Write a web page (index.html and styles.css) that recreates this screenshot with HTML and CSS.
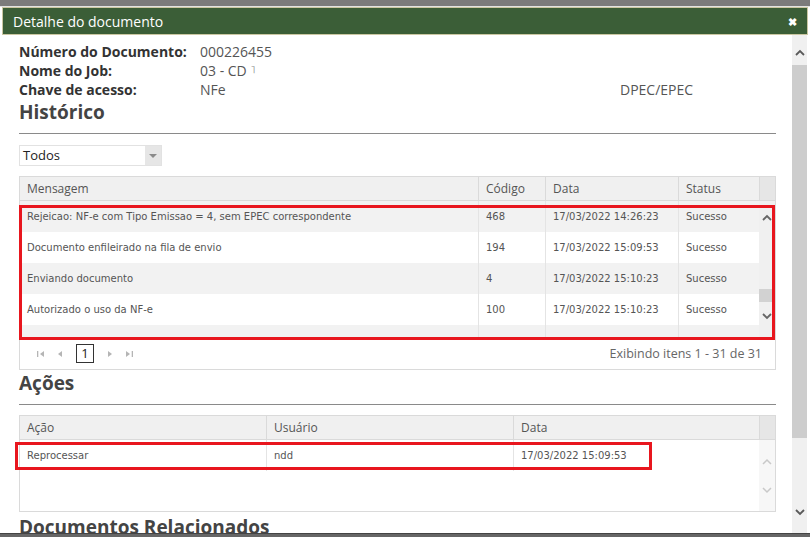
FILE: index.html
```html
<!DOCTYPE html>
<html lang="pt-BR">
<head>
  <meta charset="UTF-8">
  <title>Detalhe do documento</title>
  <link rel="stylesheet" href="styles.css">
</head>
<body>
  <div class="top-strip"></div>

  <div class="dialog-title">
    <span>Detalhe do documento</span>
    <span class="dialog-close">&#10006;</span>
  </div>

  <div class="dialog-body">
    <div class="dialog-content">

      <!-- dados do documento -->
      <div class="doc-info">
        <span class="doc-label">Número do Documento:</span>
        <span class="doc-value wide">000226455</span>
        <span class="doc-label">Nome do Job:</span>
        <span class="doc-value wide">03 - CD <span class="cut">˥</span></span>
        <span class="doc-label">Chave de acesso:</span>
        <span class="doc-value">NFe</span>
        <span class="doc-value">DPEC/EPEC</span>
      </div>

      <!-- Historico -->
      <h3 class="section-title">Histórico</h3>
      <hr class="section-rule">

      <div class="dropdown">
        <span>Todos</span>
        <span class="dropdown-arrow"></span>
      </div>

      <div class="grid grid-history">
        <div class="grid-head">
          <div class="cell">Mensagem</div>
          <div class="cell">Código</div>
          <div class="cell">Data</div>
          <div class="cell">Status</div>
          <div class="cell gutter-head"></div>
        </div>
        <div class="grid-body">
          <div class="grid-rows">
            <div class="row alt">
              <div class="cell">Rejeicao: NF-e com Tipo Emissao = 4, sem EPEC correspondente</div>
              <div class="cell">468</div>
              <div class="cell">17/03/2022 14:26:23</div>
              <div class="cell">Sucesso</div>
            </div>
            <div class="row">
              <div class="cell">Documento enfileirado na fila de envio</div>
              <div class="cell">194</div>
              <div class="cell">17/03/2022 15:09:53</div>
              <div class="cell">Sucesso</div>
            </div>
            <div class="row alt">
              <div class="cell">Enviando documento</div>
              <div class="cell">4</div>
              <div class="cell">17/03/2022 15:10:23</div>
              <div class="cell">Sucesso</div>
            </div>
            <div class="row">
              <div class="cell">Autorizado o uso da NF-e</div>
              <div class="cell">100</div>
              <div class="cell">17/03/2022 15:10:23</div>
              <div class="cell">Sucesso</div>
            </div>
            <div class="row alt">
              <div class="cell"></div>
              <div class="cell"></div>
              <div class="cell"></div>
              <div class="cell"></div>
            </div>
          </div>
          <div class="mini-scroll">
            <svg class="chev" width="10" height="7" viewBox="0 0 10 7"><polyline points="1,6 5,2 9,6" fill="none" stroke="#666" stroke-width="1.8"/></svg>
            <div class="mini-thumb"></div>
            <svg class="chev chev-down" width="10" height="7" viewBox="0 0 10 7"><polyline points="1,1 5,5 9,1" fill="none" stroke="#666" stroke-width="1.8"/></svg>
          </div>
        </div>
        <div class="pager">
          <svg class="pg first" width="8" height="8" viewBox="0 0 8 8"><rect x="0" y="1" width="1.3" height="6" fill="#b5b5b5"/><polygon points="7,1 3,4 7,7" fill="#b5b5b5"/></svg>
          <svg class="pg prev" width="6" height="8" viewBox="0 0 6 8"><polygon points="5,1 1,4 5,7" fill="#b5b5b5"/></svg>
          <span class="pg-current">1</span>
          <svg class="pg next" width="6" height="8" viewBox="0 0 6 8"><polygon points="1,1 5,4 1,7" fill="#b5b5b5"/></svg>
          <svg class="pg last" width="8" height="8" viewBox="0 0 8 8"><polygon points="1,1 5,4 1,7" fill="#b5b5b5"/><rect x="6.7" y="1" width="1.3" height="6" fill="#b5b5b5"/></svg>
          <span class="pg-info">Exibindo itens 1 - 31 de 31</span>
        </div>
        <div class="highlight hl-history"></div>
      </div>

      <!-- Acoes -->
      <h3 class="section-title">Ações</h3>
      <hr class="section-rule">

      <div class="grid grid-actions">
        <div class="grid-head">
          <div class="cell">Ação</div>
          <div class="cell">Usuário</div>
          <div class="cell">Data</div>
          <div class="cell gutter-head"></div>
        </div>
        <div class="grid-body">
          <div class="grid-rows">
            <div class="row">
              <div class="cell">Reprocessar</div>
              <div class="cell">ndd</div>
              <div class="cell">17/03/2022 15:09:53</div>
            </div>
          </div>
          <div class="mini-scroll faded">
            <svg class="chev" width="10" height="7" viewBox="0 0 10 7"><polyline points="1,6 5,2 9,6" fill="none" stroke="#c9c9c9" stroke-width="1.5"/></svg>
            <svg class="chev chev-down" width="10" height="7" viewBox="0 0 10 7"><polyline points="1,1 5,5 9,1" fill="none" stroke="#c9c9c9" stroke-width="1.5"/></svg>
          </div>
        </div>
        <div class="highlight hl-actions"></div>
      </div>

      <h3 class="section-title related">Documentos Relacionados</h3>
    </div>

    <div class="page-scroll">
      <svg class="chev" width="10" height="7" viewBox="0 0 10 7"><polyline points="1,6 5,2 9,6" fill="none" stroke="#5a5a5a" stroke-width="1.8"/></svg>
      <div class="page-thumb"></div>
      <svg class="chev chev-down" width="10" height="7" viewBox="0 0 10 7"><polyline points="1,1 5,5 9,1" fill="none" stroke="#5a5a5a" stroke-width="1.8"/></svg>
    </div>
  </div>

  <div class="bottom-strip"></div>
</body>
</html>
```

FILE: styles.css
```css
* {
  box-sizing: border-box;
}

body {
  margin: 0;
  width: 810px;
  height: 537px;
  overflow: hidden;
  background: #fff;
  font-family: "Open Sans", Arial, sans-serif;
  color: #555;
}

.top-strip {
  height: 7px;
  background: #7b7b7b;
  border-bottom: 1px solid #e2e2e2;
}

.dialog-title {
  height: 28px;
  margin: 0 2px;
  padding: 0 10px;
  display: flex;
  justify-content: space-between;
  align-items: center;
  background: #3b5e37;
  border: 1px solid #cbc7a2;
  color: #fff;
  font-size: 14px;
}

.dialog-close {
  font-size: 11px;
  font-weight: bold;
}

.dialog-body {
  height: 498px;
  display: flex;
}

.dialog-content {
  flex: 1;
  padding: 7px 16px 0 19px;
  overflow: hidden;
}

/* info do documento */
.doc-info {
  display: grid;
  grid-template-columns: 181px 420px 1fr;
  grid-auto-rows: 19px;
  line-height: 19px;
  font-size: 14px;
}

.doc-label {
  font-weight: bold;
  color: #333;
  font-size: 14px;
}

.doc-value {
  color: #555;
}

.wide {
  grid-column: span 2;
}

.cut {
  font-family: "DejaVu Sans", sans-serif;
  font-size: 10px;
  line-height: 0;
  color: #888;
  vertical-align: 3px;
}

.section-title {
  margin: 1px 0 0;
  font-size: 19px;
  line-height: 24px;
  font-weight: bold;
  color: #444;
}

.section-title.related {
  margin-top: 3px;
}

.section-rule {
  margin: 9px 0 0;
  border: 0;
  border-top: 1px solid #8a8a8a;
  height: 0;
}

.dropdown {
  margin-top: 11px;
  width: 143px;
  height: 21px;
  display: flex;
  justify-content: space-between;
  border: 1px solid #e2e2e2;
  font-size: 13px;
  color: #222;
  line-height: 19px;
  padding-left: 3px;
}

.dropdown-arrow {
  width: 16px;
  background: #e6e6e6;
  position: relative;
}

.dropdown-arrow::after {
  content: "";
  position: absolute;
  left: 4px;
  top: 8px;
  border-left: 4px solid transparent;
  border-right: 4px solid transparent;
  border-top: 4px solid #8a8a8a;
}

/* grids */
.grid {
  position: relative;
  margin-top: 10px;
  border: 1px solid #dadada;
}

.grid-head {
  display: grid;
  height: 24px;
  background: #f0f0f0;
  border-bottom: 1px solid #dadada;
  font-size: 12px;
  color: #555;
}

.grid-head .cell {
  padding-left: 7px;
  line-height: 23px;
}

.grid-head .cell + .cell {
  border-left: 1px solid #dadada;
}

.gutter-head {
  background: #e6e6e6;
}

.grid-body {
  display: flex;
}

.grid-rows {
  flex: 1;
}

.row {
  display: grid;
  height: 31px;
  font-family: "DejaVu Sans", Verdana, sans-serif;
  font-size: 10px;
  color: #555;
}

.row.alt {
  background: #f2f2f2;
}

.row .cell {
  padding-left: 7px;
  line-height: 31px;
  white-space: nowrap;
}

.row .cell + .cell {
  border-left: 1px solid #e4e4e4;
}

.grid-history .grid-head {
  grid-template-columns: 458px 67px 133px 81px 16px;
}

.grid-history .row {
  grid-template-columns: 458px 67px 133px 81px;
}

.grid-history .grid-body {
  height: 136px;
  overflow: hidden;
}

.grid-actions .grid-head {
  grid-template-columns: 246px 247px 246px 16px;
}

.grid-actions .row {
  grid-template-columns: 246px 247px 246px;
}

.grid-actions .grid-body {
  height: 71px;
}

.mini-scroll {
  width: 16px;
  background: #f0f0f0;
  display: flex;
  flex-direction: column;
  align-items: center;
  padding-top: 13px;
}

.mini-thumb {
  margin-top: 68px;
  width: 16px;
  height: 13px;
  background: #d2d2d2;
}

.mini-scroll .chev-down {
  margin-top: 11px;
}

.mini-scroll.faded {
  background: #f7f7f7;
  padding-top: 18px;
}

.mini-scroll.faded .chev-down {
  margin-top: 22px;
}

.pager {
  height: 32px;
  border-top: 1px solid #cfcfcf;
  display: flex;
  align-items: center;
  padding: 0 13px 0 17px;
}

.pg.prev {
  margin-left: 12px;
}

.pg-current {
  margin-left: 13px;
  width: 18px;
  height: 19px;
  border: 1px solid #333;
  font-size: 13px;
  line-height: 17px;
  text-align: center;
  color: #222;
}

.pg.next {
  margin-left: 13px;
}

.pg.last {
  margin-left: 12px;
}

.pg-info {
  margin-left: auto;
  font-size: 12.5px;
  color: #666;
}

/* marcacao vermelha */
.highlight {
  position: absolute;
  border: 3px solid #e8161e;
}

.hl-history {
  top: 28px;
  left: -1px;
  width: 756px;
  height: 135px;
}

.hl-actions {
  top: 26px;
  left: -5px;
  width: 637px;
  height: 28px;
}

/* scroll da janela */
.page-scroll {
  width: 15px;
  margin-right: 3px;
  background: #f0f0f0;
  display: flex;
  flex-direction: column;
  align-items: center;
  padding-top: 14px;
}

.page-thumb {
  margin-top: 9px;
  width: 15px;
  height: 373px;
  background: #cdcdcd;
}

.page-scroll .chev-down {
  margin-top: 71px;
}

.bottom-strip {
  height: 4px;
  background: #666;
  border-top: 1px solid #444;
}
```
